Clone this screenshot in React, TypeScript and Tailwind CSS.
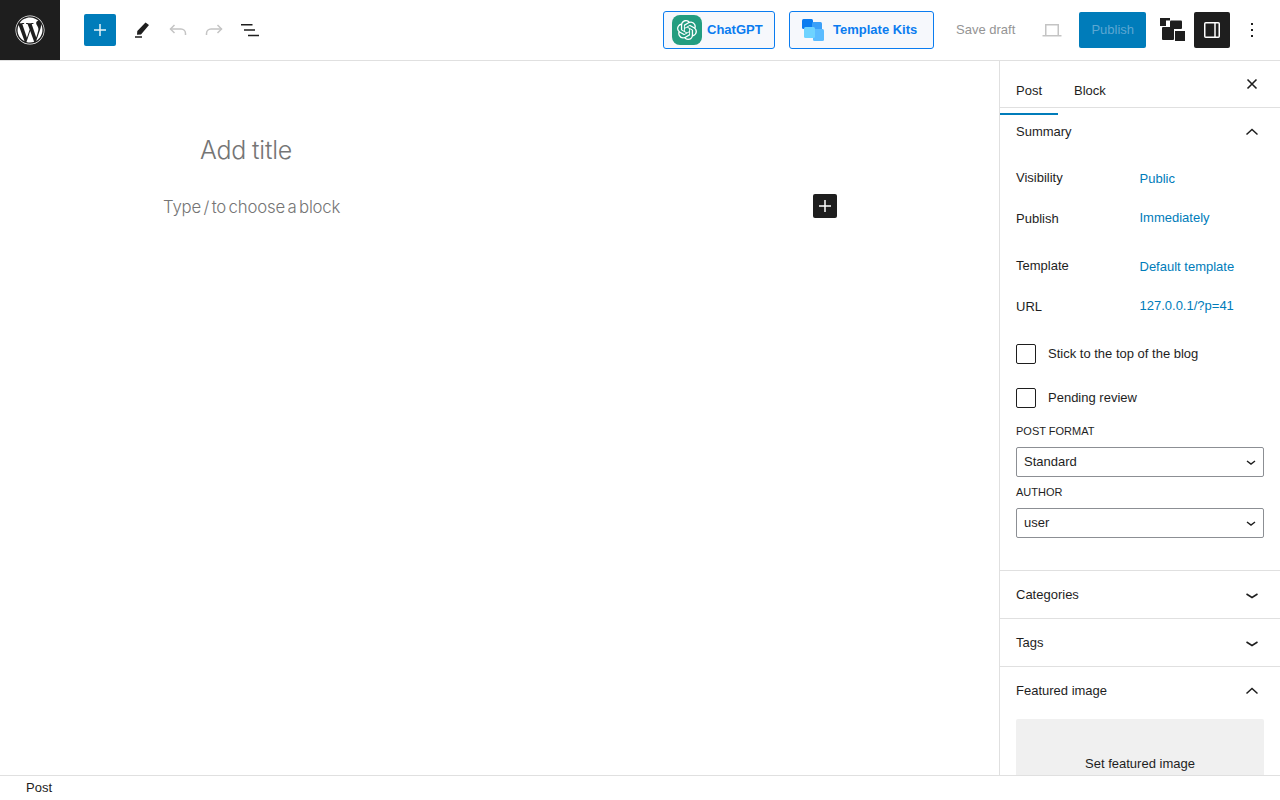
import React from "react";
import { FaWordpress } from "react-icons/fa";
import { SiOpenai } from "react-icons/si";

const Up = () => (
  <svg width="24" height="24" viewBox="0 0 24 24" fill="none" stroke="#1e1e1e" strokeWidth="1.5"><path d="M6.500 14.500 12 9.500l5.500 5" /></svg>
);
const Down = () => (
  <svg width="24" height="24" viewBox="0 0 24 24" fill="none" stroke="#1e1e1e" strokeWidth="1.5"><path d="M6.500 11 12 14.500 17.500 11" /></svg>
);
const Small = () => (
  <svg width="12" height="12" viewBox="0 0 12 12" fill="none" stroke="#1e1e1e" strokeWidth="1.4"><path d="M2 5l4 3 4-3" /></svg>
);

function Row({ label, value, cls, valueCls }: { label: string; value: string; cls: string; valueCls: string }) {
  return (
    <div className={`flex h-[20px] items-center ${cls}`}>
      <span className="w-[123.5px] text-[13px] text-[#1e1e1e]">{label}</span>
      <span className={`text-[13px] text-[#007cba] ${valueCls}`}>{value}</span>
    </div>
  );
}

function Check({ label, cls }: { label: string; cls: string }) {
  return (
    <div className={`flex items-center gap-3 ${cls}`}>
      <span className="h-5 w-5 rounded-[2px] border border-[#1e1e1e] bg-white" />
      <span className="text-[13px] text-[#1e1e1e]">{label}</span>
    </div>
  );
}

function Select({ value }: { value: string }) {
  return (
    <div className="mt-[9px] flex h-[30px] items-center justify-between rounded-[2px] border border-[#8c8f94] pl-[7px] pr-[6px] text-[13px] text-[#1e1e1e]">
      {value}
      <Small />
    </div>
  );
}

function Panel({ title, open }: { title: string; open?: boolean }) {
  return (
    <div className="flex h-[48px] items-center justify-between border-t border-[#e0e0e0] pl-4 pr-4 text-[13px] text-[#1e1e1e]">
      {title}
      {open ? <Up /> : <Down />}
    </div>
  );
}

export default function App() {
  return (
    <div className="flex h-[800px] w-[1280px] flex-col overflow-hidden bg-white font-['Liberation_Sans',sans-serif]">
      <header className="flex h-[61px] shrink-0 items-center border-b border-[#e0e0e0]">
        <div className="flex h-[60px] w-[60px] items-center justify-center bg-[#1e1e1e] text-white">
          <FaWordpress size={30} />
        </div>
        <button className="ml-6 flex h-8 w-8 items-center justify-center rounded-[2px] bg-[#007cba]">
          <svg width="24" height="24" viewBox="0 0 24 24" fill="#fff" opacity="0.9"><path d="M11.250 6h1.500v5.250H18v1.500h-5.250V18h-1.500v-5.250H6v-1.500h5.250z" /></svg>
        </button>
        <svg className="ml-[10px]" width="24" height="24" viewBox="0 0 24 24" fill="#1e1e1e"><path d="M19.500 4.500 23 7l-8 9.500-4 .3.300-3.800zM9 18.200h7v1.500H9z" /></svg>
        <svg className="ml-4" width="24" height="24" viewBox="0 0 24 24" fill="none" stroke="#c4c4c4" strokeWidth="1.5"><path d="M8.500 7 4.500 11l4 4" /><path d="M4.500 11H15c2.500 0 4.500 2 4.500 4.500V17" /></svg>
        <svg className="ml-3" width="24" height="24" viewBox="0 0 24 24" fill="none" stroke="#c4c4c4" strokeWidth="1.5"><path d="M15.500 7l4 4-4 4" /><path d="M19.500 11H9c-2.500 0-4.500 2-4.500 4.500V17" /></svg>
        <svg className="ml-3" width="24" height="24" viewBox="0 0 24 24" fill="#1e1e1e"><path d="M3 6h11.500v1.500H3zM6 11.250h11v1.500H6zM10 16.800h11v1.500H10z" /></svg>

        <div className="ml-[401px] flex h-[38px] w-[112px] items-center rounded-[3px] border border-[#0a7cf0] bg-[#f6f8fc] pl-2">
          <span className="flex h-[30px] w-[30px] items-center justify-center rounded-[8px] bg-[#239d80] text-white">
            <SiOpenai size={20} />
          </span>
          <span className="ml-[5px] text-[13px] font-bold text-[#0a7cf0]">ChatGPT</span>
        </div>
        <div className="ml-[14px] flex h-[38px] w-[145px] items-center rounded-[3px] border border-[#0a7cf0] bg-[#f6f8fc] pl-3">
          <svg width="23" height="24" viewBox="0 0 23 24">
            <rect x="0" y="1" width="11" height="10" rx="1.500" fill="#0a7cf0" />
            <rect x="10" y="4" width="10" height="10" rx="1.500" fill="#3ba0f8" />
            <rect x="11" y="11" width="11" height="12" rx="1.500" fill="#5bbcff" />
            <rect x="2" y="9" width="11" height="11" rx="1.500" fill="#6ed3ff" />
          </svg>
          <span className="ml-[8px] text-[13px] font-bold text-[#0a7cf0]">Template Kits</span>
        </div>
        <span className="ml-[22px] text-[13px] text-[#949494]">Save draft</span>
        <svg className="ml-[25px]" width="24" height="24" viewBox="0 0 24 24" fill="none" stroke="#c4c4c4" strokeWidth="1.500"><path d="M5.750 17V6.750h12.500V17" /><path d="M2.500 17.750h19" /></svg>
        <button className="ml-[15px] flex h-9 w-[67px] items-center justify-center rounded-[2px] bg-[#007cba] text-[13px] text-[#5ca7d2]">Publish</button>
        <svg className="ml-[13px]" width="26" height="26" viewBox="0 0 26 26" fill="#1e1e1e">
          <path d="M1 1h10v2.500H7v5.500H1z" />
          <rect x="11" y="3.500" width="12" height="8.500" rx="1" />
          <rect x="3" y="10" width="12" height="13" rx="1" />
          <path d="M16 14h10v10H16z" />
        </svg>
        <button className="ml-[9px] flex h-9 w-9 items-center justify-center rounded-[2px] bg-[#1e1e1e]">
          <svg width="24" height="24" viewBox="0 0 24 24" fill="none" stroke="#fff" strokeWidth="1.500"><rect x="4.750" y="4.750" width="14.500" height="14.500" rx="1" /><path d="M15 4.750v14.500" /></svg>
        </button>
        <svg className="ml-[10px]" width="24" height="24" viewBox="0 0 24 24" fill="#1e1e1e"><path d="M11 5h2v2h-2zM11 11h2v2h-2zM11 17h2v2h-2z" /></svg>
      </header>

      <div className="flex min-h-0 flex-1">
        <main className="relative flex-1">
          <div className="ml-[200px] mt-[72px] font-['Inter',sans-serif] text-[25px] font-light leading-[34px] tracking-[-0.2px] text-[#757575] [word-spacing:-1px]">Add title</div>
          <div className="ml-[163px] mt-[27px] font-['Inter',sans-serif] text-[16.800px] font-light leading-[26px] tracking-[-0.2px] text-[#757575] [word-spacing:-2px]">Type / to choose a block</div>
          <button className="absolute left-[813px] top-[133px] flex h-6 w-6 items-center justify-center rounded-[2px] bg-[#1e1e1e]">
            <svg width="24" height="24" viewBox="0 0 24 24" fill="#fff"><path d="M11.250 6h1.500v5.250H18v1.500h-5.250V18h-1.500v-5.250H6v-1.500h5.250z" /></svg>
          </button>
        </main>

        <aside className="w-[281px] shrink-0 overflow-hidden border-l border-[#e0e0e0]">
          <div className="relative flex h-[47px] items-end border-b border-[#e0e0e0] text-[13px] text-[#1e1e1e]">
            <span className="mb-[7px] ml-4">Post</span>
            <span className="mb-[7px] ml-8">Block</span>
            <svg className="absolute right-[16px] top-[11px]" width="24" height="24" viewBox="0 0 24 24" fill="none" stroke="#1e1e1e" strokeWidth="1.600"><path d="M7.500 7.500l9 9M16.500 7.500l-9 9" /></svg>
          </div>
          <div className="relative flex h-[47px] items-center justify-between pl-4 pr-4 text-[13px] text-[#1e1e1e]">
            <span className="absolute left-0 top-[5px] h-[2px] w-[58px] bg-[#007cba]" />
            Summary
            <Up />
          </div>
          <div className="px-4">
            <Row label="Visibility" value="Public" cls="mt-[13px]" valueCls="mt-[2px]" />
            <Row label="Publish" value="Immediately" cls="mt-[21px]" valueCls="mb-[2px]" />
            <Row label="Template" value="Default template" cls="mt-[27px]" valueCls="mt-[2px]" />
            <Row label="URL" value="127.0.0.1/?p=41" cls="mt-[21px]" valueCls="mb-[2px]" />
            <Check label="Stick to the top of the blog" cls="mt-[27px]" />
            <Check label="Pending review" cls="mt-[24px]" />
            <div className="mt-[16px] text-[11px] leading-[14px] text-[#1e1e1e]">POST FORMAT</div>
            <Select value="Standard" />
            <div className="mt-[8px] text-[11px] leading-[14px] text-[#1e1e1e]">AUTHOR</div>
            <Select value="user" />
          </div>
          <div className="mt-[32px]">
            <Panel title="Categories" />
            <Panel title="Tags" />
            <Panel title="Featured image" open />
          </div>
          <div className="mx-4 mt-[5px] h-[100px] rounded-[2px] bg-[#f0f0f0] pt-[35px] text-center text-[13px] text-[#1e1e1e]">Set featured image</div>
        </aside>
      </div>

      <footer className="flex h-[25px] shrink-0 items-center border-t border-[#e0e0e0] bg-white pl-[26px] text-[13px] text-[#1e1e1e]">Post</footer>
    </div>
  );
}
